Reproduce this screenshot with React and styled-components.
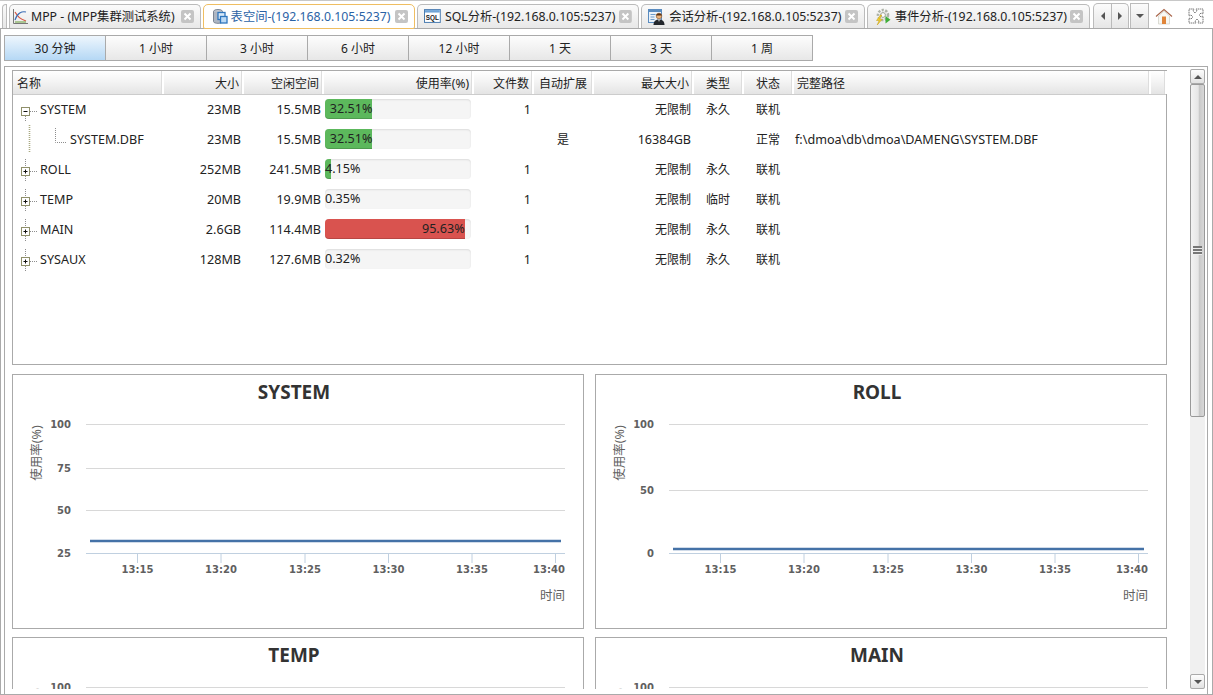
import React from 'react';
import styled, { createGlobalStyle } from 'styled-components';

const FONT = '"Noto Sans", "Noto Sans CJK SC", sans-serif';

const GlobalStyle = createGlobalStyle`
  html, body {
    margin: 0;
    padding: 0;
    background: #fff;
    overflow: hidden;
  }
  body {
    font-family: ${FONT};
    font-size: 12px;
    color: #222;
  }
`;

const Page = styled.div`
  width: 1213px;
  height: 695px;
  display: flex;
  flex-direction: column;
  overflow: hidden;
`;

const TabBar = styled.div`
  height: 29px;
  box-sizing: border-box;
  display: flex;
  align-items: flex-end;
  border-top: 1px solid #c8c8c8;
  border-bottom: 1px solid #aaa;
  padding-left: 2px;
`;

const TabStub = styled.div`
  width: 5px;
  height: 24px;
  box-sizing: border-box;
  margin-right: 2px;
  border: 1px solid #bbb;
  border-bottom: none;
  border-radius: 4px 0 0 0;
  background: linear-gradient(#fafafa, #e6e6e6);
`;

const Tab = styled.div`
  width: ${(p) => p.$w}px;
  height: ${(p) => (p.$active ? 25 : 24)}px;
  box-sizing: border-box;
  margin-right: 2px;
  margin-bottom: ${(p) => (p.$active ? -1 : 0)}px;
  display: flex;
  align-items: center;
  gap: ${(p) => p.$gap}px;
  padding: 0 6px 0 ${(p) => p.$pad}px;
  white-space: nowrap;
  font-size: 12.3px;
  color: ${(p) => (p.$active ? '#2a62a5' : '#222')};
  border: 1px solid ${(p) => (p.$active ? '#efbe62' : '#bbb')};
  border-bottom: ${(p) => (p.$active ? '1px solid #efbe62' : 'none')};
  border-radius: ${(p) => (p.$active ? '5px 5px 2px 2px' : '5px 5px 0 0')};
  background: ${(p) => (p.$active ? '#fff' : 'linear-gradient(#fbfbfb, #e8e8e8)')};
`;

const TabLabel = styled.span`
  flex: 1;
  line-height: 16px;
`;

const NavGroup = styled.div`
  width: 36px;
  height: 25px;
  box-sizing: border-box;
  margin-left: 1px;
  display: flex;
  border: 1px solid #bbb;
  border-bottom: none;
  border-radius: 5px 5px 0 0;
  background: linear-gradient(#fbfbfb, #e6e6e6);
`;

const NavButton = styled.div`
  flex: 1;
  display: flex;
  align-items: center;
  justify-content: center;
  & + & {
    border-left: 1px solid #bbb;
  }
`;

const MenuButton = styled(NavGroup)`
  width: 19px;
  margin-left: 1px;
  border-radius: 0;
  align-items: center;
  justify-content: center;
`;

const ToolIcon = styled.div`
  width: ${(p) => p.$w}px;
  height: 24px;
  display: flex;
  align-items: center;
  justify-content: center;
`;

const Body = styled.div`
  flex: 1;
  min-height: 0;
  display: flex;
  flex-direction: column;
  padding: 6px 4px 0 3px;
  border: 1px solid #aaa;
  border-top: none;
`;

const TimeBar = styled.div`
  width: 809px;
  height: 26px;
  box-sizing: border-box;
  display: flex;
  flex-shrink: 0;
  border: 1px solid #aaa;
`;

const TimeButton = styled.div`
  flex: 1;
  display: flex;
  align-items: center;
  justify-content: center;
  background: ${(p) =>
    p.$active ? 'linear-gradient(#eef6fd, #b5d8f5)' : 'linear-gradient(#fdfdfd, #e7e7e7)'};
  & + & {
    border-left: 1px solid #aaa;
  }
`;

const Pane = styled.div`
  flex: 1;
  min-height: 0;
  margin-top: 5px;
  display: flex;
  padding-bottom: 5px;
  border: 1px solid #aaa;
  border-bottom: none;
`;

const Viewport = styled.div`
  flex: 1;
  min-width: 0;
  padding: 3px 23px 0 7px;
  overflow: hidden;
`;

const Scrollbar = styled.div`
  width: 15px;
  margin: 2px 2px 0 0;
  display: flex;
  flex-direction: column;
  background: #f0f0f0;
`;

const ScrollButton = styled.div`
  height: 15px;
  box-sizing: border-box;
  flex-shrink: 0;
  display: flex;
  align-items: center;
  justify-content: center;
  border: 1px solid #aaa;
  border-radius: 2px;
  background: linear-gradient(#fdfdfd, #e2e2e2);
`;

const ScrollThumb = styled.div`
  height: 333px;
  box-sizing: border-box;
  flex-shrink: 0;
  display: flex;
  align-items: center;
  justify-content: center;
  border: 1px solid #999;
  border-radius: 2px;
  background: linear-gradient(90deg, #f2f2f2, #e6e6e6 55%, #c9c9c9 65%, #d8d8d8);
`;

const ScrollGrip = styled.div`
  width: 9px;
  height: 9px;
  background: repeating-linear-gradient(#777 0, #777 2px, #eee 2px, #eee 3px);
`;

const ScrollSpace = styled.div`
  flex: 1;
`;

const TablePanel = styled.div`
  height: 295px;
  box-sizing: border-box;
  border: 1px solid #aaa;
  margin-bottom: 9px;
`;

const COLUMNS = '150px 80px 80px 150px 60px 60px 100px 50px 50px 357px 16px';

const HeaderRow = styled.div`
  display: grid;
  grid-template-columns: ${COLUMNS};
  height: 24px;
  box-sizing: border-box;
  border-bottom: 1px solid #ccc;
  background: linear-gradient(#fff, #f4f4f4 45%, #e4e4e4);
`;

const HeaderCell = styled.div`
  display: flex;
  align-items: center;
  justify-content: ${(p) => p.$align || 'flex-start'};
  padding: 0 3px 0 4px;
  white-space: nowrap;
  border-right: 2px solid #fff;
  box-shadow: inset -1px 0 0 #ddd;
  margin-right: -1px;
`;

const Row = styled.div`
  display: grid;
  grid-template-columns: ${COLUMNS};
  height: 30px;
  align-items: center;
  font-size: 12.6px;
`;

const Cell = styled.div`
  display: flex;
  align-items: center;
  justify-content: ${(p) => p.$align || 'flex-start'};
  padding: 0 2px 2px;
  white-space: nowrap;
  font-size: ${(p) => (p.$zh ? '12px' : 'inherit')};
`;

const NameCell = styled.div`
  display: flex;
  align-items: center;
  height: 30px;
`;

const NameText = styled.span`
  margin-top: -2px;
`;

const Progress = styled.div`
  width: 146px;
  height: 20px;
  border-radius: 4px;
  background: #f5f5f5;
  box-shadow: inset 0 1px 2px rgba(0, 0, 0, 0.1);
`;

const fillColors = { ok: '#5cb85c', danger: '#d9534f', none: 'transparent' };

const ProgressFill = styled.div`
  height: 100%;
  line-height: 20px;
  text-align: right;
  white-space: nowrap;
  color: #222;
  border-radius: 4px 0 0 4px;
  background: ${(p) => fillColors[p.$tone]};
  box-shadow: ${(p) => (p.$tone === 'none' ? 'none' : 'inset 0 -1px 0 rgba(0, 0, 0, 0.15)')};
`;

const ChartGrid = styled.div`
  display: grid;
  grid-template-columns: 572px 572px;
  column-gap: 11px;
  row-gap: 8px;
`;

const ChartCard = styled.div`
  height: 255px;
  box-sizing: border-box;
  border: 1px solid #aaa;
`;

const ChartTitle = styled.div`
  height: 34px;
  padding-right: 8px;
  display: flex;
  align-items: center;
  justify-content: center;
  font-size: 19px;
  font-weight: 700;
  color: #333;
`;

const ChartSvg = styled.svg`
  display: block;
`;

const TickText = styled.text`
  font-family: 'DejaVu Sans', sans-serif;
  font-size: 10px;
  font-weight: 700;
  fill: #606060;
`;

const AxisTitle = styled.text`
  font-family: ${FONT};
  font-size: 12.5px;
  fill: #606060;
`;

const CloseIcon = () => (
  <svg width="13" height="13" viewBox="0 0 13 13">
    <rect x="0" y="0" width="13" height="13" rx="2" fill="#c4c4c4" />
    <path d="M3.5 3.5l6 6M9.5 3.5l-6 6" stroke="#fff" strokeWidth="2" />
  </svg>
);

const MppIcon = () => (
  <svg width="17" height="17" viewBox="0 0 17 17">
    <path d="M1.5 1v14.5H16" fill="none" stroke="#777" />
    <path d="M3 4c3 5 5 7 11 9" fill="none" stroke="#d9533f" strokeWidth="1.2" />
    <path d="M3 12c2-7 7-9 11-8" fill="none" stroke="#3b6db5" strokeWidth="1.2" />
    <path d="M3 14h11" stroke="#7dab55" strokeWidth="1.2" />
  </svg>
);

const SpaceIcon = () => (
  <svg width="17" height="17" viewBox="0 0 17 17">
    <ellipse cx="6" cy="3.5" rx="4.5" ry="2" fill="#c6ccd6" stroke="#7b8594" />
    <path d="M1.5 3.5v10c0 2.4 9 2.4 9 0v-10" fill="#aeb6c2" stroke="#7b8594" />
    <rect x="6" y="4.5" width="7" height="7" fill="#d6e8f8" stroke="#2f76bd" strokeWidth="1.3" />
    <rect x="8.5" y="8.5" width="6.5" height="6.5" fill="#bcdaf5" stroke="#2f76bd" strokeWidth="1.3" />
  </svg>
);

const SqlIcon = () => (
  <svg width="17" height="17" viewBox="0 0 17 17">
    <rect x="0.5" y="1.5" width="16" height="13" fill="#fff" stroke="#4a7cb0" />
    <rect x="1" y="2" width="15" height="2.5" fill="#6fa3d6" />
    <text x="8.5" y="12" textAnchor="middle" fontFamily="'Liberation Sans', sans-serif" fontSize="6.5" fontWeight="700" fill="#222">SQL</text>
  </svg>
);

const SessionIcon = () => (
  <svg width="18" height="18" viewBox="0 0 18 18">
    <rect x="0.5" y="1.5" width="13" height="13" fill="#eaf2fa" stroke="#5a8cc0" />
    <rect x="1" y="2" width="12" height="2" fill="#5a8cc0" />
    <path d="M2.5 6.5h5M2.5 9h4M2.5 11.5h4" stroke="#6d9ccb" />
    <circle cx="11" cy="8" r="2.8" fill="#e9b27d" stroke="#7a4a20" strokeWidth="0.6" />
    <path d="M8.2 7.5c.4-2.6 5.2-2.6 5.6 0z" fill="#5c3413" />
    <path d="M5.5 17c0-4 2.5-5.6 5.5-5.6s5.5 1.6 5.5 5.6z" fill="#23272d" />
    <path d="M10.2 11.5h1.6l-.8 2.6z" fill="#fff" />
  </svg>
);

const EventIcon = () => (
  <svg width="18" height="18" viewBox="0 0 18 18">
    <circle cx="9" cy="7" r="5" fill="none" stroke="#aeb3a8" strokeWidth="2.6" strokeDasharray="2.2 1.4" />
    <circle cx="9" cy="7" r="2.4" fill="#fff" stroke="#9aa094" />
    <path d="M6.5 7L2.5 12.5h2.6L3.2 17l5-5.8H5.6L7.8 7z" fill="#f2cf2f" stroke="#c09a12" strokeWidth="0.5" />
    <path d="M11.5 8v7.5l5-3.75z" fill="#3fae3a" />
  </svg>
);

const HomeIcon = () => (
  <svg width="18" height="17" viewBox="0 0 18 17">
    <path d="M1 8.5L9 1.5l8 7" fill="none" stroke="#a9654a" strokeWidth="1.1" />
    <path d="M3.5 8v8h11V8L9 3.2z" fill="#f8f8f4" stroke="#cfcfc4" strokeWidth="0.7" />
    <rect x="7" y="8.5" width="4" height="7.5" fill="#e0853a" />
  </svg>
);

const RestoreIcon = () => (
  <svg width="16" height="16" viewBox="0 0 16 16">
    <path
      d="M1 1h5L5 3l2 2 2-2-1-2h7v5l-2-1-2 2 2 2 2-1v7h-5l1-2-2-2-2 2 1 2H1v-5l2 1 2-2-2-2-2 1z"
      fill="#fff"
      stroke="#777"
      strokeWidth="1"
      strokeDasharray="1.5 0.6"
    />
  </svg>
);

const Triangle = ({ dir, color = '#555' }) => {
  const shapes = {
    left: 'M5 1v8L1 5z',
    right: 'M1 1v8l4-4z',
    down: 'M0 3h8L4 7z',
    up: 'M0 7h8L4 3z',
  };
  const side = dir === 'left' || dir === 'right';
  return (
    <svg width={side ? 6 : 8} height="10" viewBox={side ? '0 0 6 10' : '0 0 8 10'}>
      <path d={shapes[dir]} fill={color} />
    </svg>
  );
};

const DOT = '#8d8d8d';

const TreeToggle = ({ open }) => (
  <svg width="27" height="30" viewBox="0 0 27 30">
    {!open && <path d="M12.5 4v8" stroke={DOT} strokeDasharray="1 1" />}
    <path d="M12.5 21v5" stroke={DOT} strokeDasharray="1 1" />
    <path d="M17 16.5h7" stroke={DOT} strokeDasharray="1 1" />
    <rect x="8.5" y="12.5" width="8" height="8" fill="#fff" stroke="#8f8f6a" />
    <path d="M10.5 16.5h4" stroke="#111" />
    {!open && <path d="M12.5 14.5v4" stroke="#111" />}
  </svg>
);

const TreeBranch = () => (
  <svg width="57" height="30" viewBox="0 0 57 30">
    <path d="M16.5 0v28" stroke="#a9a982" strokeWidth="1.6" strokeDasharray="1 1" />
    <path d="M42.5 3v14.5H53" fill="none" stroke={DOT} strokeDasharray="1 1" />
  </svg>
);

const tabs = [
  { w: 192, pad: 2, gap: 2, label: 'MPP - (MPP集群测试系统)', icon: <MppIcon /> },
  { w: 213, pad: 8, gap: 2, label: '表空间-(192.168.0.105:5237)', icon: <SpaceIcon />, active: true },
  { w: 222, pad: 6, gap: 4, label: 'SQL分析-(192.168.0.105:5237)', icon: <SqlIcon /> },
  { w: 224, pad: 6, gap: 3, label: '会话分析-(192.168.0.105:5237)', icon: <SessionIcon /> },
  { w: 224, pad: 6, gap: 3, label: '事件分析-(192.168.0.105:5237)', icon: <EventIcon /> },
];

const ranges = ['30 分钟', '1 小时', '3 小时', '6 小时', '12 小时', '1 天', '3 天', '1 周'];

const rows = [
  { name: 'SYSTEM', size: '23MB', free: '15.5MB', used: 32.51, files: '1', max: '无限制', type: '永久', state: '联机', open: true },
  { name: 'SYSTEM.DBF', size: '23MB', free: '15.5MB', used: 32.51, ext: '是', max: '16384GB', state: '正常', path: 'f:\\dmoa\\db\\dmoa\\DAMENG\\SYSTEM.DBF', child: true },
  { name: 'ROLL', size: '252MB', free: '241.5MB', used: 4.15, files: '1', max: '无限制', type: '永久', state: '联机' },
  { name: 'TEMP', size: '20MB', free: '19.9MB', used: 0.35, files: '1', max: '无限制', type: '临时', state: '联机' },
  { name: 'MAIN', size: '2.6GB', free: '114.4MB', used: 95.63, files: '1', max: '无限制', type: '永久', state: '联机' },
  { name: 'SYSAUX', size: '128MB', free: '127.6MB', used: 0.32, files: '1', max: '无限制', type: '永久', state: '联机' },
];

const toneFor = (used) => {
  if (used < 1) return 'none';
  return used > 90 ? 'danger' : 'ok';
};

const ticks = [
  ['13:15', 124.5, 124.5],
  ['13:20', 208, 208],
  ['13:25', 292, 292],
  ['13:30', 375.5, 375.5],
  ['13:35', 459, 459],
  ['13:40', 542.5, 536],
];

const charts = [
  { title: 'SYSTEM', grid: [['100', 15], ['75', 59], ['50', 101], ['25', 144]], line: 132 },
  { title: 'ROLL', grid: [['100', 15], ['50', 81], ['0', 144]], line: 140 },
  { title: 'TEMP', grid: [['100', 15], ['75', 59], ['50', 101], ['25', 144]], line: 140 },
  { title: 'MAIN', grid: [['100', 15], ['50', 81], ['0', 144]], line: 20 },
];

const Chart = ({ title, grid, line }) => (
  <ChartCard>
    <ChartTitle>{title}</ChartTitle>
    <ChartSvg width="570" height="219" viewBox="0 0 570 219">
      {grid.map(([label, y], i) => (
        <g key={label}>
          <path d={`M73 ${y + 0.5}H552`} stroke={i === grid.length - 1 ? '#c0d0e0' : '#d8d8d8'} />
          <TickText x="58" y={y + 4} textAnchor="end">{label}</TickText>
        </g>
      ))}
      {ticks.map(([label, x, tx]) => (
        <g key={label}>
          <path d={`M${x} 144V154`} stroke="#c0d0e0" />
          <TickText x={tx} y="164" textAnchor="middle">{label}</TickText>
        </g>
      ))}
      <path d={`M77 ${line}H548`} stroke="#4572a7" strokeWidth="2.5" />
      <AxisTitle transform="translate(28 44) rotate(-90)" textAnchor="middle">使用率(%)</AxisTitle>
      <AxisTitle x="552" y="191" textAnchor="end">时间</AxisTitle>
    </ChartSvg>
  </ChartCard>
);

export default function App() {
  return (
    <Page>
      <GlobalStyle />
      <TabBar>
        <TabStub />
        {tabs.map((t) => (
          <Tab key={t.label} $w={t.w} $pad={t.pad} $gap={t.gap} $active={t.active}>
            {t.icon}
            <TabLabel>{t.label}</TabLabel>
            <CloseIcon />
          </Tab>
        ))}
        <NavGroup>
          <NavButton><Triangle dir="left" /></NavButton>
          <NavButton><Triangle dir="right" /></NavButton>
        </NavGroup>
        <MenuButton><Triangle dir="down" /></MenuButton>
        <ToolIcon $w={30}><HomeIcon /></ToolIcon>
        <ToolIcon $w={34}><RestoreIcon /></ToolIcon>
      </TabBar>
      <Body>
        <TimeBar>
          {ranges.map((r, i) => (
            <TimeButton key={r} $active={i === 0}>{r}</TimeButton>
          ))}
        </TimeBar>
        <Pane>
          <Viewport>
            <TablePanel>
              <HeaderRow>
                <HeaderCell>名称</HeaderCell>
                <HeaderCell $align="flex-end">大小</HeaderCell>
                <HeaderCell $align="flex-end">空闲空间</HeaderCell>
                <HeaderCell $align="flex-end">使用率(%)</HeaderCell>
                <HeaderCell $align="flex-end">文件数</HeaderCell>
                <HeaderCell $align="center">自动扩展</HeaderCell>
                <HeaderCell $align="flex-end">最大大小</HeaderCell>
                <HeaderCell $align="center">类型</HeaderCell>
                <HeaderCell $align="center">状态</HeaderCell>
                <HeaderCell>完整路径</HeaderCell>
                <HeaderCell />
              </HeaderRow>
              {rows.map((r) => (
                <Row key={r.name}>
                  <NameCell>
                    {r.child ? <TreeBranch /> : <TreeToggle open={r.open} />}
                    <NameText>{r.name}</NameText>
                  </NameCell>
                  <Cell $align="flex-end">{r.size}</Cell>
                  <Cell $align="flex-end">{r.free}</Cell>
                  <Cell>
                    <Progress>
                      <ProgressFill $tone={toneFor(r.used)} style={{ width: `${r.used}%` }}>
                        {r.used.toFixed(2)}%
                      </ProgressFill>
                    </Progress>
                  </Cell>
                  <Cell $align="flex-end">{r.files}</Cell>
                  <Cell $align="center" $zh>{r.ext}</Cell>
                  <Cell $align="flex-end" $zh={!r.child}>{r.max}</Cell>
                  <Cell $align="center" $zh>{r.type}</Cell>
                  <Cell $align="center" $zh>{r.state}</Cell>
                  <Cell>{r.path}</Cell>
                  <div />
                </Row>
              ))}
            </TablePanel>
            <ChartGrid>
              {charts.map((c) => (
                <Chart key={c.title} {...c} />
              ))}
            </ChartGrid>
          </Viewport>
          <Scrollbar>
            <ScrollButton><Triangle dir="up" /></ScrollButton>
            <ScrollThumb><ScrollGrip /></ScrollThumb>
            <ScrollSpace />
            <ScrollButton><Triangle dir="down" /></ScrollButton>
          </Scrollbar>
        </Pane>
      </Body>
    </Page>
  );
}
